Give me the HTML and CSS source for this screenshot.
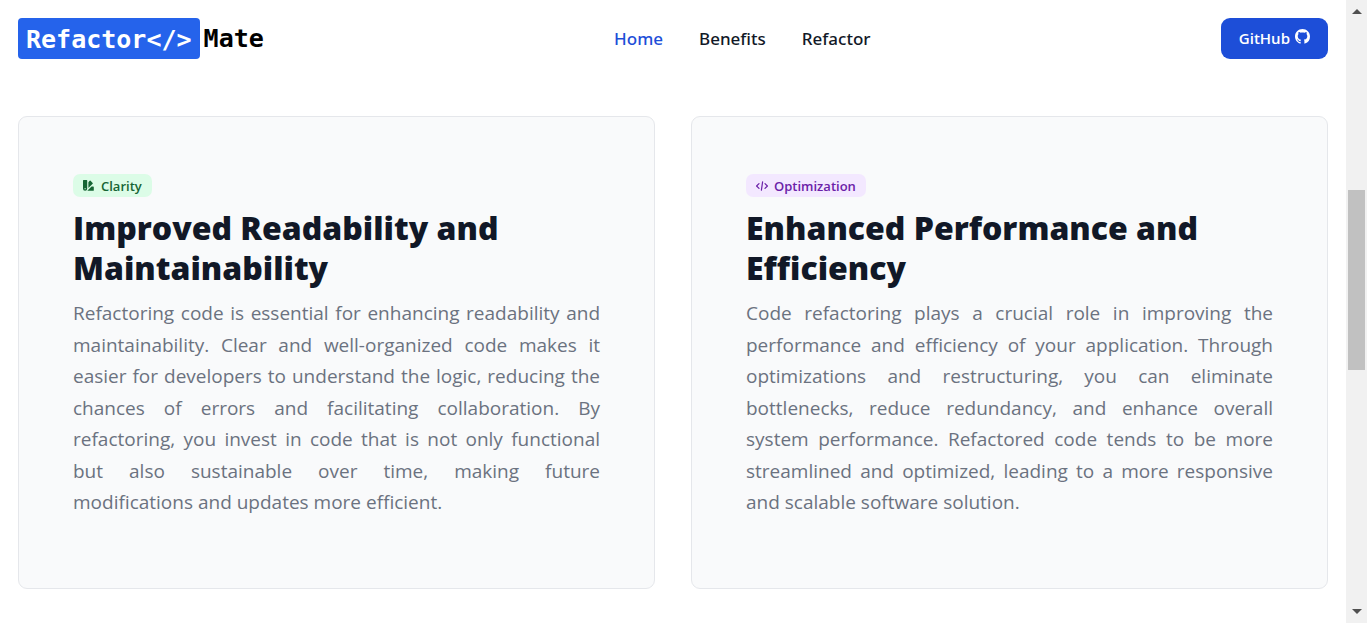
FILE: index.html
```html
<!DOCTYPE html>
<html lang="en">
<head>
<meta charset="utf-8">
<meta name="viewport" content="width=device-width, initial-scale=1">
<title>Refactor Mate</title>
<link rel="stylesheet" href="styles.css">
</head>
<body>
<div class="page">
  <header class="header">
    <a class="logo" href="#"><span class="logo-mark">Refactor&lt;/&gt;</span><span class="logo-name">Mate</span></a>
    <nav class="nav">
      <a class="nav-link active" href="#">Home</a>
      <a class="nav-link" href="#benefits">Benefits</a>
      <a class="nav-link" href="#refactor">Refactor</a>
    </nav>
    <button class="github" type="button">GitHub
      <svg class="github-icon" viewBox="0 0 16 16" fill="currentColor" aria-hidden="true"><path d="M8 0C3.58 0 0 3.58 0 8c0 3.54 2.29 6.53 5.47 7.59.4.07.55-.17.55-.38 0-.19-.01-.82-.01-1.49-2.01.37-2.53-.49-2.69-.94-.09-.23-.48-.94-.82-1.13-.28-.15-.68-.52-.01-.53.63-.01 1.08.58 1.23.82.72 1.21 1.87.87 2.33.66.07-.52.28-.87.51-1.07-1.78-.2-3.64-.89-3.64-3.95 0-.87.31-1.59.82-2.15-.08-.2-.36-1.02.08-2.12 0 0 .67-.21 2.2.82.64-.18 1.32-.27 2-.27s1.36.09 2 .27c1.53-1.04 2.2-.82 2.2-.82.44 1.1.16 1.92.08 2.12.51.56.82 1.27.82 2.15 0 3.07-1.87 3.75-3.65 3.95.29.25.54.73.54 1.48 0 1.07-.01 1.93-.01 2.2 0 .21.15.46.55.38A8.01 8.01 0 0 0 16 8c0-4.42-3.58-8-8-8Z"/></svg>
    </button>
  </header>
  <main class="cards" id="benefits">
    <article class="card">
      <span class="badge green">
        <svg class="badge-icon" viewBox="0 0 20 20" fill="currentColor" aria-hidden="true"><path d="M17 11h-2.722L8 17.278a5.512 5.512 0 0 1-.9.722H17a1 1 0 0 0 1-1v-5a1 1 0 0 0-1-1ZM6 0H1a1 1 0 0 0-1 1v13.5a3.5 3.5 0 1 0 7 0V1a1 1 0 0 0-1-1ZM3.5 15.5a1 1 0 1 1 0-2 1 1 0 0 1 0 2ZM16.132 4.9 12.6 1.368a1 1 0 0 0-1.414 0L9 3.55v9.9l7.132-7.132a1 1 0 0 0 0-1.418Z"/></svg>
        Clarity
      </span>
      <h2 class="title">Improved Readability and Maintainability</h2>
      <p class="text">Refactoring code is essential for enhancing readability and maintainability. Clear and well-organized code makes it easier for developers to understand the logic, reducing the chances of errors and facilitating collaboration. By refactoring, you invest in code that is not only functional but also sustainable over time, making future modifications&nbsp;and updates more efficient.</p>
    </article>
    <article class="card">
      <span class="badge purple">
        <svg class="badge-icon" viewBox="0 0 20 16" fill="none" stroke="currentColor" stroke-width="2" stroke-linecap="round" stroke-linejoin="round" aria-hidden="true"><path d="M5 4 1 8l4 4m10-8 4 4-4 4M11 1 9 15"/></svg>
        Optimization
      </span>
      <h2 class="title">Enhanced Performance and Efficiency</h2>
      <p class="text">Code refactoring plays a crucial role in improving the performance and efficiency of your application. Through optimizations and restructuring, you can eliminate bottlenecks, reduce redundancy, and enhance overall system performance. Refactored code tends to be more streamlined and optimized, leading to a more responsive and scalable software solution.</p>
    </article>
  </main>
</div>
<div class="scrollbar" aria-hidden="true">
  <span class="arrow up"></span>
  <div class="track"><div class="thumb"></div></div>
  <span class="arrow down"></span>
</div>
</body>
</html>
```
FILE: styles.css
```css
* {
  box-sizing: border-box;
}

body {
  display: flex;
  min-height: 100vh;
  margin: 0;
  background: #fff;
  color: #111827;
  font-family: "Open Sans", "Noto Sans", sans-serif;
}

.page {
  flex: 1;
  min-width: 0;
}

.header {
  display: flex;
  align-items: center;
  justify-content: space-between;
  padding: 18px;
}

.logo {
  display: flex;
  align-items: center;
  gap: 4px;
  color: #000;
  font: bold 25px/32px "DejaVu Sans Mono", monospace;
  text-decoration: none;
}

.logo-mark {
  padding: 6px 8px 3px;
  border-radius: 4px;
  background: #2563eb;
  color: #fff;
}

.nav {
  display: flex;
  gap: 36px;
}

.nav-link {
  color: #111827;
  font-family: "Noto Sans", "Open Sans", sans-serif;
  font-size: 17px;
  font-weight: 500;
  line-height: 28px;
  text-decoration: none;
}

.nav-link.active {
  color: #1d4ed8;
}

.github {
  display: flex;
  gap: 5px;
  padding: 9px 18px;
  border: 0;
  border-radius: 9px;
  background: #1d4ed8;
  color: #fff;
  font: 600 15px/23px "Open Sans", "Noto Sans", sans-serif;
}

.github-icon {
  width: 15px;
  height: 15px;
  margin-top: 2px;
}

.cards {
  display: grid;
  grid-template-columns: 1fr 1fr;
  gap: 36px;
  padding: 39px 18px 34px;
}

.card {
  padding: 57px 54px 69px;
  border: 1px solid #e5e7eb;
  border-radius: 9px;
  background: #f9fafb;
}

.badge {
  display: inline-flex;
  align-items: center;
  gap: 6px;
  padding: 1px 10px 0;
  border-radius: 7px;
  font-size: 13px;
  font-weight: 600;
  line-height: 22px;
  vertical-align: top;
}

.badge-icon {
  width: 12px;
  height: 12px;
}

.green {
  background: #dcfce7;
  color: #166534;
}

.purple {
  background: #f3e8ff;
  color: #6b21a8;
}

.title {
  margin: 11px 0 10px;
  font-size: 32px;
  font-weight: 800;
  line-height: 40px;
}

.text {
  margin: 0;
  color: #6b7280;
  font-size: 19px;
  line-height: 1.66;
  text-align: justify;
}

.scrollbar {
  display: flex;
  flex-direction: column;
  align-items: center;
  justify-content: space-between;
  width: 21px;
  padding: 9px 0;
  background: #f1f1f1;
}

.track {
  flex: 1;
  width: 17px;
}

.thumb {
  height: 180px;
  margin-top: 176px;
  background: #c1c1c1;
}

.arrow {
  border: 5px solid transparent;
}

.up {
  border-top: 0;
  border-bottom-color: #505050;
}

.down {
  border-bottom: 0;
  border-top-color: #505050;
}
```
